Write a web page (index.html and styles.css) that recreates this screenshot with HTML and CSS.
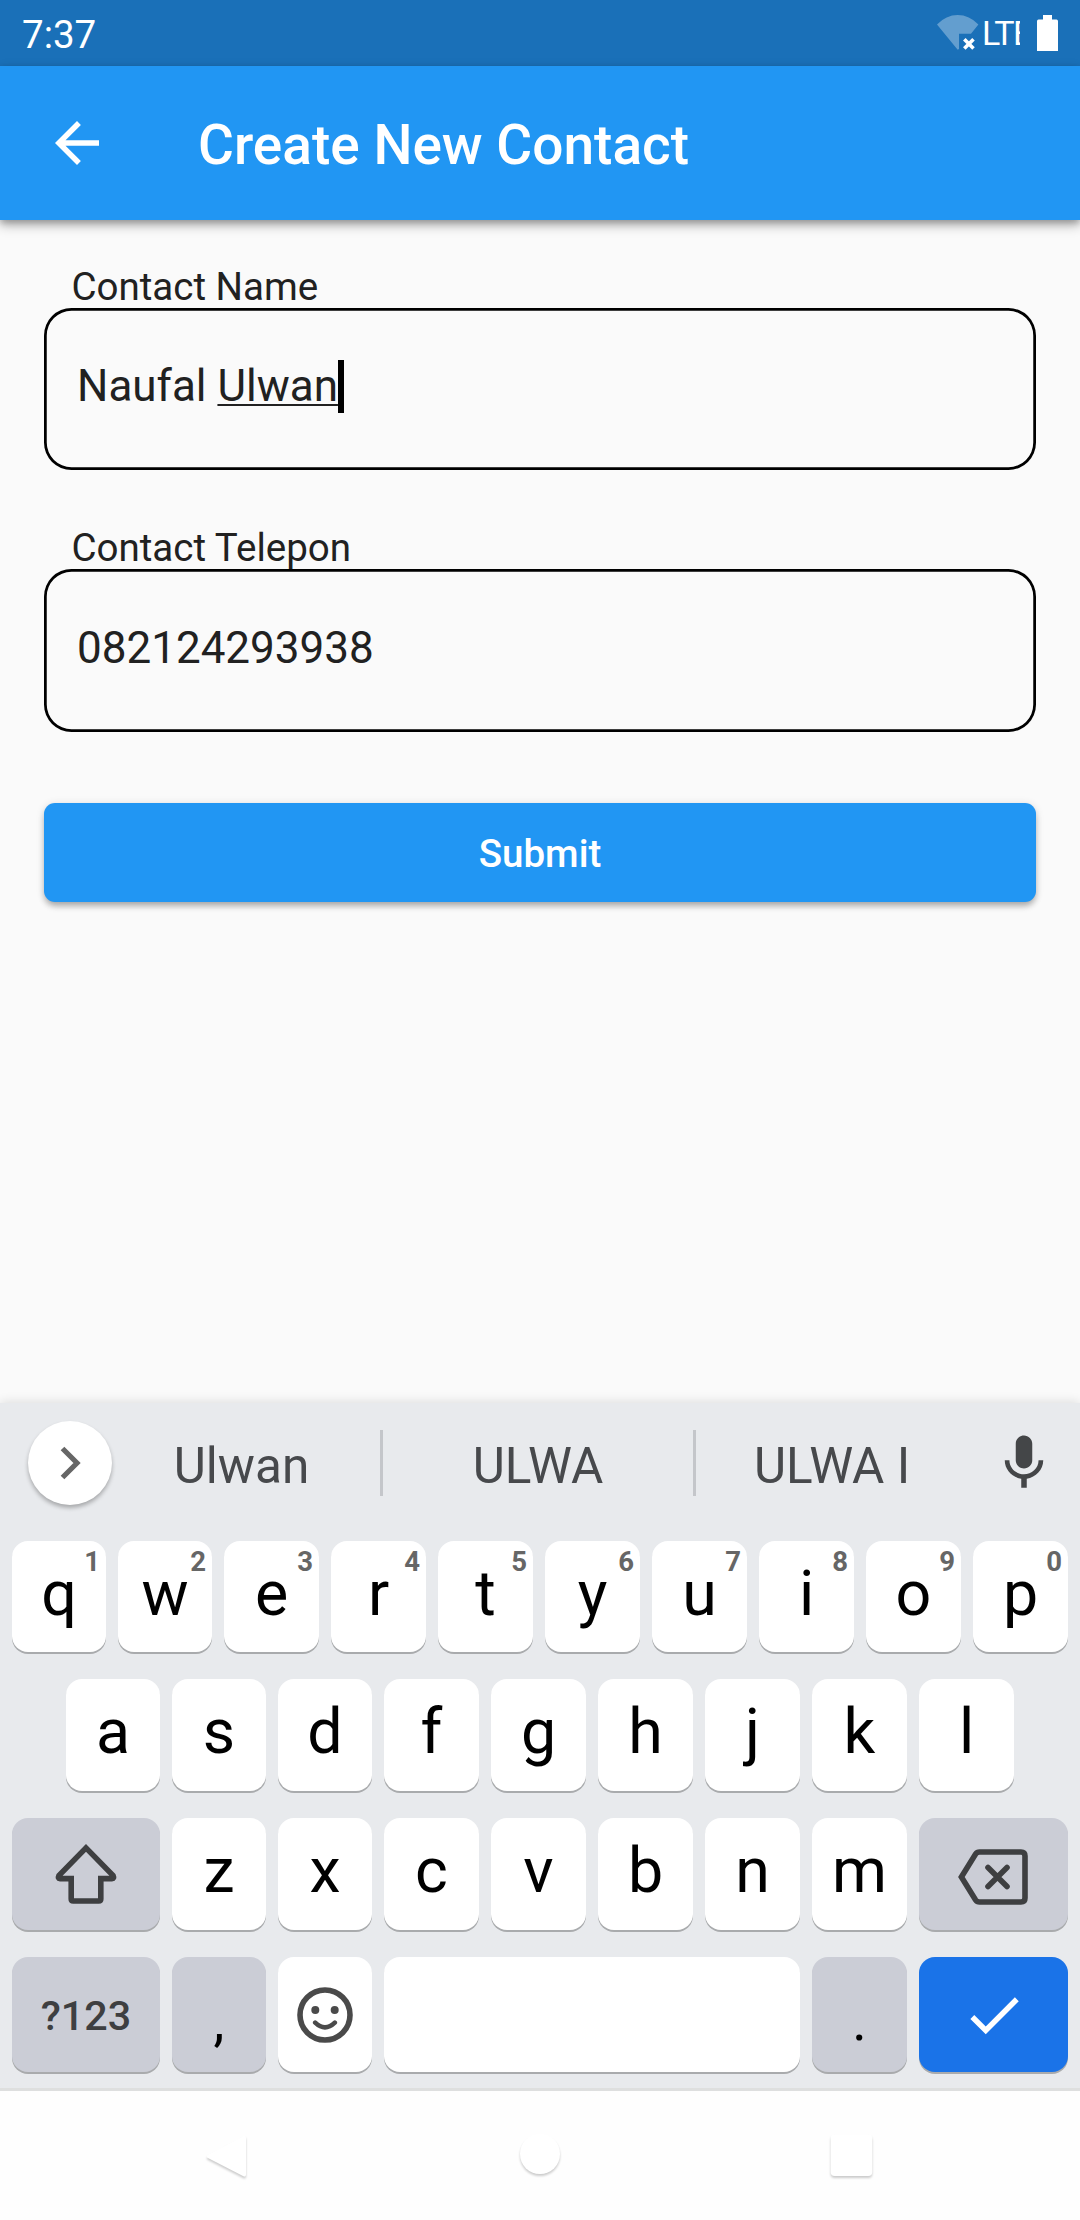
FILE: index.html
```html
<!DOCTYPE html>
<html lang="en">
<head>
<meta charset="utf-8">
<title>Create New Contact</title>
<link rel="stylesheet" href="styles.css">
</head>
<body>
<div class="screen">
  <header class="status">
    <span class="clock">7:37</span>
    <div class="indicators">
      <svg class="wifi" width="42" height="36" viewBox="0 0 42 36">
        <path d="M0 9.5Q9 0 20.700 0T41.400 9.500L34 18.700H22V34L20.700 34.700Z" fill="#fff" fill-opacity=".32"/>
        <path d="M27.300 24.300L36.500 33.500M36.500 24.300L27.300 33.500" stroke="#fff" stroke-width="3.600"/>
      </svg>
      <span class="network">LTE</span>
      <svg class="battery" width="21" height="36" viewBox="0 0 21 36">
        <path d="M6 0h9v4h4.500q1.500 0 1.500 1.500v28.500q0 1.700-1.500 1.700h-18q-1.500 0-1.500-1.700v-28.500q0-1.500 1.500-1.500h4.500z" transform="scale(1 1.120)" fill="#fff"/>
      </svg>
    </div>
  </header>
  <div class="appbar">
    <svg class="back" viewBox="0 0 24 24"><path d="M20 11H7.830l5.590-5.590L12 4l-8 8 8 8 1.410-1.410L7.830 13H20v-2z" fill="#fff"/></svg>
    <h1 class="title">Create New Contact</h1>
  </div>
  <main class="form">
    <div class="group">
      <div class="label">Contact Name</div>
      <div class="field">Naufal&nbsp;<span class="composing">Ulwan</span><span class="caret"></span></div>
    </div>
    <div class="group">
      <div class="label">Contact Telepon</div>
      <div class="field phone">082124293938</div>
    </div>
    <button class="submit" type="button">Submit</button>
  </main>
  <section class="keyboard">
    <div class="suggestions">
      <div class="expand"><svg width="84" height="84" viewBox="0 0 84 84"><path d="M34.500 27.500L49 42L34.500 56.500" fill="none" stroke="#666" stroke-width="5.200"/></svg></div>
      <span>Ulwan</span><i class="rule"></i><span>ULWA</span><i class="rule"></i><span>ULWA I</span>
      <svg class="mic" viewBox="0 0 24 24"><path d="M12 14c1.660 0 3-1.340 3-3V5c0-1.660-1.340-3-3-3S9 3.340 9 5v6c0 1.660 1.340 3 3 3zm5.300-3c0 3-2.540 5.100-5.300 5.100S6.700 14 6.700 11H5c0 3.410 2.720 6.230 6 6.720V21h2v-3.280c3.280-.48 6-3.300 6-6.720h-1.700z" fill="#444648"/></svg>
    </div>
    <div class="row row-1">
      <div class="key">q<sup>1</sup></div><div class="key">w<sup>2</sup></div><div class="key">e<sup>3</sup></div><div class="key">r<sup>4</sup></div><div class="key">t<sup>5</sup></div><div class="key">y<sup>6</sup></div><div class="key">u<sup>7</sup></div><div class="key">i<sup>8</sup></div><div class="key">o<sup>9</sup></div><div class="key">p<sup>0</sup></div>
    </div>
    <div class="row row-2">
      <div class="key">a</div><div class="key">s</div><div class="key">d</div><div class="key">f</div><div class="key">g</div><div class="key">h</div><div class="key">j</div><div class="key">k</div><div class="key">l</div>
    </div>
    <div class="row row-3">
      <div class="key dim icon"><svg width="64" height="62" viewBox="0 0 64 62"><path d="M32 4.900L4.900 32.600Q3.500 35.600 6 35.600H17.200V56Q17.200 58 19.200 58H44.800Q46.800 58 46.800 56V35.600H58Q60.500 35.600 59.100 32.600Z" fill="none" stroke="#3e3f41" stroke-width="5.600"/></svg></div>
      <div class="key">z</div><div class="key">x</div><div class="key">c</div><div class="key">v</div><div class="key">b</div><div class="key">n</div><div class="key">m</div>
      <div class="key dim icon erase"><svg width="70" height="56" viewBox="0 0 70 56"><path d="M3.400 28L17.600 5Q19 3 21.500 3H63Q67 3 67 7V49Q67 53 63 53H21.500Q19 53 17.600 51Z" fill="none" stroke="#3e3f41" stroke-width="5.600"/><path d="M30 18.500L49 37.500M49 18.500L30 37.500" stroke="#3e3f41" stroke-width="5.600" stroke-linecap="round"/></svg></div>
    </div>
    <div class="row row-4">
      <div class="key dim symbols">?123</div>
      <div class="key dim punct">,</div>
      <div class="key icon"><svg width="56" height="56" viewBox="0 0 56 56"><circle cx="28" cy="28" r="25" fill="none" stroke="#4a4a4a" stroke-width="5.600"/><circle cx="18.300" cy="23" r="4" fill="#4a4a4a"/><circle cx="37.700" cy="23" r="4" fill="#4a4a4a"/><path d="M18.200 35.700Q28 45.100 37.800 35.700" fill="none" stroke="#4a4a4a" stroke-width="4.600" stroke-linecap="round"/></svg></div>
      <div class="key"></div>
      <div class="key dim punct">.</div>
      <div class="key enter icon"><svg width="66" height="66" viewBox="0 0 24 24"><path d="M9 16.170L4.830 12l-1.420 1.410L9 19 21 7l-1.410-1.410z" fill="#fff"/></svg></div>
    </div>
  </section>
  <nav class="navbar">
    <svg class="nav-icon" viewBox="0 0 60 60"><path d="M9 30Q6.500 28.500 9 27L44 8.500Q47 7 47 10V46.500Q47 49.500 44 48Z" fill="#fff"/></svg>
    <svg class="nav-icon" viewBox="0 0 60 60"><circle cx="30" cy="26" r="20" fill="#fff"/></svg>
    <svg class="nav-icon" viewBox="0 0 60 60"><rect x="9.700" y="6.500" width="41.500" height="41.500" rx="4" fill="#fff"/></svg>
  </nav>
</div>
</body>
</html>
```
FILE: styles.css
```css
* { box-sizing: border-box; }
body {
  margin: 0;
  font-family: Roboto, "Liberation Sans", sans-serif;
  background: #fafafa;
}
svg { display: block; flex: none; }
.screen {
  width: 1080px;
  height: 2220px;
  display: flex;
  flex-direction: column;
  overflow: hidden;
}

/* Status bar */
.status {
  height: 66px;
  flex: none;
  background: #1a70b8;
  color: #fff;
  display: flex;
  justify-content: space-between;
  padding: 0 22px;
}
.clock { font-size: 38.5px; line-height: 69px; }
.indicators { display: flex; padding-top: 15px; }
.network {
  width: 38px;
  margin: -1px 17px 0 3px;
  overflow: hidden;
  font-size: 34px;
  letter-spacing: -1.5px;
  line-height: 38px;
}

/* App bar */
.appbar {
  height: 154px;
  flex: none;
  background: #2196f3;
  color: #fff;
  display: flex;
  align-items: center;
  padding-left: 44px;
  box-shadow: 0 5px 11px rgba(0, 0, 0, .3), 0 3px 6px rgba(0, 0, 0, .18);
}
.back { width: 66px; height: 66px; }
.title {
  margin: 4px 0 0 88px;
  font-size: 55px;
  font-weight: 500;
  line-height: 64px;
}

/* Form */
.form { flex: 1; padding: 44px 44px 0; color: #212121; }
.group { margin-bottom: 55px; }
.group:nth-child(2) { margin-bottom: 71.5px; }
.label {
  height: 44px;
  padding-left: 27.5px;
  font-size: 38.5px;
  line-height: 45px;
}
.field {
  height: 162.25px;
  padding: 52px 33px 0;
  border-radius: 27.5px;
  box-shadow: inset 0 0 0 2.75px #000;
  display: flex;
  align-items: flex-start;
  font-size: 44px;
  line-height: 52px;
}
.phone { padding-top: 53px; }
.composing {
  text-decoration: underline;
  text-decoration-thickness: 2.2px;
  text-underline-offset: 2.5px;
  text-decoration-skip-ink: none;
}
.caret { width: 6px; height: 52.5px; background: #000; }
.submit {
  width: 100%;
  height: 99px;
  display: block;
  padding: 2px 0 0;
  border: 0;
  border-radius: 11px;
  background: #2196f3;
  color: #fff;
  font-family: inherit;
  font-size: 38.5px;
  font-weight: 500;
  box-shadow: 0 5px 6px -1px rgba(0, 0, 0, .28), 0 1px 8px rgba(0, 0, 0, .12);
}

/* Keyboard */
.keyboard {
  height: 688px;
  flex: none;
  background: #e8eaed;
  border-bottom: 3px solid #dedfdf;
  box-shadow: 0 -1px 10px rgba(0, 0, 0, .12);
}
.suggestions {
  height: 120px;
  margin-bottom: 18px;
  display: grid;
  grid-template-columns: 103px 277px 3px 310px 3px 272px 112px;
  align-items: center;
  justify-items: center;
  font-size: 49.5px;
  line-height: 58px;
  color: #47494c;
}
.suggestions span { margin-top: 6px; white-space: nowrap; }
.expand {
  width: 84px;
  height: 84px;
  justify-self: start;
  margin-left: 27.5px;
  border-radius: 50%;
  background: #fff;
  box-shadow: 0 3px 4px rgba(0, 0, 0, .28);
}
.rule { width: 3px; height: 66px; background: #c4c6ca; }
.mic { width: 66px; height: 66px; }
.row {
  display: grid;
  grid-template-rows: 100%;
  column-gap: 12px;
  padding: 0 12px;
  margin-bottom: 27px;
}
.row-1 { grid-template-columns: repeat(2, 94px) repeat(8, 95px); height: 111px; }
.row-2 { grid-template-columns: repeat(3, 94px) repeat(6, 95px); height: 112px; padding: 0 66px; }
.row-3 { grid-template-columns: 148px repeat(2, 94px) repeat(5, 95px) 149px; height: 112px; }
.row-4 { grid-template-columns: 148px 94px 94px 1fr 95px 149px; height: 115px; margin: 0; }
.key {
  position: relative;
  border-radius: 16px;
  background: #fff;
  box-shadow: 0 2px 0 #a9abad;
  color: #000;
  font-size: 62.7px;
  line-height: 106px;
  text-align: center;
}
.key sup {
  position: absolute;
  top: 5px;
  right: 6px;
  color: #666;
  font-size: 27.5px;
  font-weight: 700;
  line-height: 32px;
}
.icon { display: flex; align-items: center; justify-content: center; }
.dim { background: #cbcdd6; }
.erase { padding: 5px 2px 0 0; }
.symbols { color: #3e3f41; font-size: 41.25px; font-weight: 500; line-height: 119px; }
.punct { font-size: 55px; line-height: 129px; }
.enter { background: #1a73e8; }

/* Navigation bar */
.navbar {
  height: 129px;
  flex: none;
  background: #fefefe;
  display: grid;
  grid-template-columns: 60px 60px 60px;
  column-gap: 251px;
  padding: 37px 0 0 199px;
}
.nav-icon {
  width: 60px;
  height: 60px;
  filter: drop-shadow(0 2.5px 1px rgba(0, 0, 0, .2));
}
```
